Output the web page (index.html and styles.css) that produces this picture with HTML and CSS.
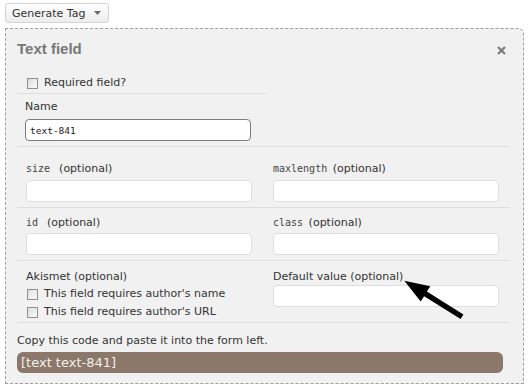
FILE: index.html
```html
<!DOCTYPE html>
<html lang="en">
<head>
    <meta charset="UTF-8">
    <title>Generate Tag - Text field</title>
    <link rel="stylesheet" href="styles.css">
</head>
<body>
    <button class="tag-button">Generate Tag
        <svg class="caret" width="7" height="4" viewBox="0 0 7 4"><polygon points="0,0 7,0 3.5,4" fill="#6b6b6b"/></svg>
    </button>

    <div class="tag-panel">
        <div class="panel-head">
            <h1>Text field</h1>
            <span class="close-x">
                <svg width="9" height="9" viewBox="0 0 9 9"><path d="M1 1 L8 8 M8 1 L1 8" stroke="#7a7a7a" stroke-width="2.2"/></svg>
            </span>
        </div>

        <div class="row">
            <div class="top-left">
                <div class="cell required-cell">
                    <label class="check"><input type="checkbox"> Required field?</label>
                </div>
                <div class="cell name-cell">
                    <div class="label">Name</div>
                    <input class="field field-name" type="text" value="text-841">
                </div>
            </div>
        </div>

        <div class="row size-row">
            <div class="cell">
                <div class="label"><code>size</code>&nbsp; (optional)</div>
                <input class="field" type="text">
            </div>
            <div class="cell">
                <div class="label"><code>maxlength</code> (optional)</div>
                <input class="field" type="text">
            </div>
        </div>

        <div class="row id-row">
            <div class="cell">
                <div class="label"><code>id</code>&nbsp; (optional)</div>
                <input class="field" type="text">
            </div>
            <div class="cell">
                <div class="label"><code>class</code> (optional)</div>
                <input class="field" type="text">
            </div>
        </div>

        <div class="row akismet-row">
            <div class="cell">
                <div class="label">Akismet (optional)</div>
                <label class="check"><input type="checkbox"> This field requires author's name</label>
                <label class="check"><input type="checkbox"> This field requires author's URL</label>
            </div>
            <div class="cell">
                <div class="label">Default value (optional)</div>
                <input class="field" type="text">
            </div>
        </div>

        <div class="copy-box">
            <div class="copy-text">Copy this code and paste it into the form left.</div>
            <div class="tag-code">[text text-841]</div>
        </div>

        <!-- annotation arrow -->
        <svg class="arrow" width="70" height="50" viewBox="0 0 70 50">
            <polygon points="4.3,4.7 30.3,10.3 26.9,15.6 63.4,38.4 60.6,43 24.1,20.2 20.7,25.5" fill="#000"/>
        </svg>
    </div>
</body>
</html>
```

FILE: styles.css
```css
* {
    margin: 0;
    padding: 0;
    box-sizing: border-box;
}

body {
    font-family: 'DejaVu Sans', Verdana, sans-serif;
    font-size: 11px;
    color: #333;
    background: #fff;
    padding: 3px 5px;
}

.tag-button {
    display: flex;
    align-items: center;
    width: 104px;
    height: 20px;
    padding: 0 6px;
    font-family: 'DejaVu Sans', Verdana, sans-serif;
    font-size: 11px;
    color: #333;
    background: linear-gradient(#fefefe, #ececec);
    border: 1px solid #d4d4d4;
    border-radius: 3px;
}

.caret {
    margin-left: auto;
    margin-right: 1px;
}

.tag-panel {
    position: relative;
    width: 519px;
    margin-top: 5px;
    padding: 8px 13px 10px 11px;
    background: #f1f1f1;
    border: 1px dashed #a0a0a0;
    border-radius: 0 6px 0 0;
}

.panel-head {
    display: flex;
    justify-content: space-between;
    align-items: center;
    height: 22px;
    margin-bottom: 9px;
}

.panel-head h1 {
    font-family: 'Liberation Sans', Arial, sans-serif;
    font-size: 15px;
    font-weight: bold;
    color: #777;
}

.close-x {
    display: flex;
    margin-right: 4px;
    margin-top: 4px;
}

.row {
    display: grid;
    grid-template-columns: 248px 245px;
    border-bottom: 1px solid #dedede;
}

.top-left {
    width: 248px;
}

.cell {
    padding: 6px 9px 5px;
}

.cell + .cell {
    padding-left: 8px;
}

.required-cell {
    padding: 6px 9px 1px 9px;
    border-bottom: 1px solid #dedede;
}

.name-cell {
    padding-top: 5px;
}

.name-cell .label {
    margin-bottom: 4px;
}

.size-row .cell {
    padding-top: 14px;
}

.id-row .cell {
    padding-top: 7px;
}

.id-row .label {
    margin-bottom: 2px;
}

.akismet-row .cell {
    padding-top: 8px;
    padding-bottom: 1px;
}

.akismet-row .label {
    margin-bottom: 0;
}

.label {
    line-height: 16px;
    margin-bottom: 3px;
}

.label code {
    font-family: 'DejaVu Sans Mono', monospace;
    font-size: 10px;
    color: #444;
    margin-right: 2px;
}

.field {
    display: block;
    width: 226px;
    height: 22px;
    padding: 0 4px;
    background: #fff;
    border: 1px solid #dedede;
    border-radius: 4px;
    font-family: 'DejaVu Sans Mono', monospace;
    font-size: 9.5px;
    color: #222;
}

.field-name {
    border-color: #7d7d7d;
}

.check {
    display: flex;
    align-items: center;
    height: 18px;
    line-height: 18px;
}

.check input {
    appearance: none;
    width: 11px;
    height: 11px;
    margin: 0 6px 0 1px;
    background: linear-gradient(135deg, #dedede, #fafafa);
    border: 1px solid #8f8f8f;
}

.copy-box {
    padding-top: 10px;
}

.copy-text {
    line-height: 16px;
    margin-bottom: 3px;
}

.tag-code {
    width: 486px;
    height: 21px;
    padding: 0 4px;
    line-height: 21px;
    font-size: 13px;
    color: #f4f0ec;
    background: #8b786b;
    border-radius: 6px;
}

.arrow {
    position: absolute;
    left: 394px;
    top: 247px;
}
```
